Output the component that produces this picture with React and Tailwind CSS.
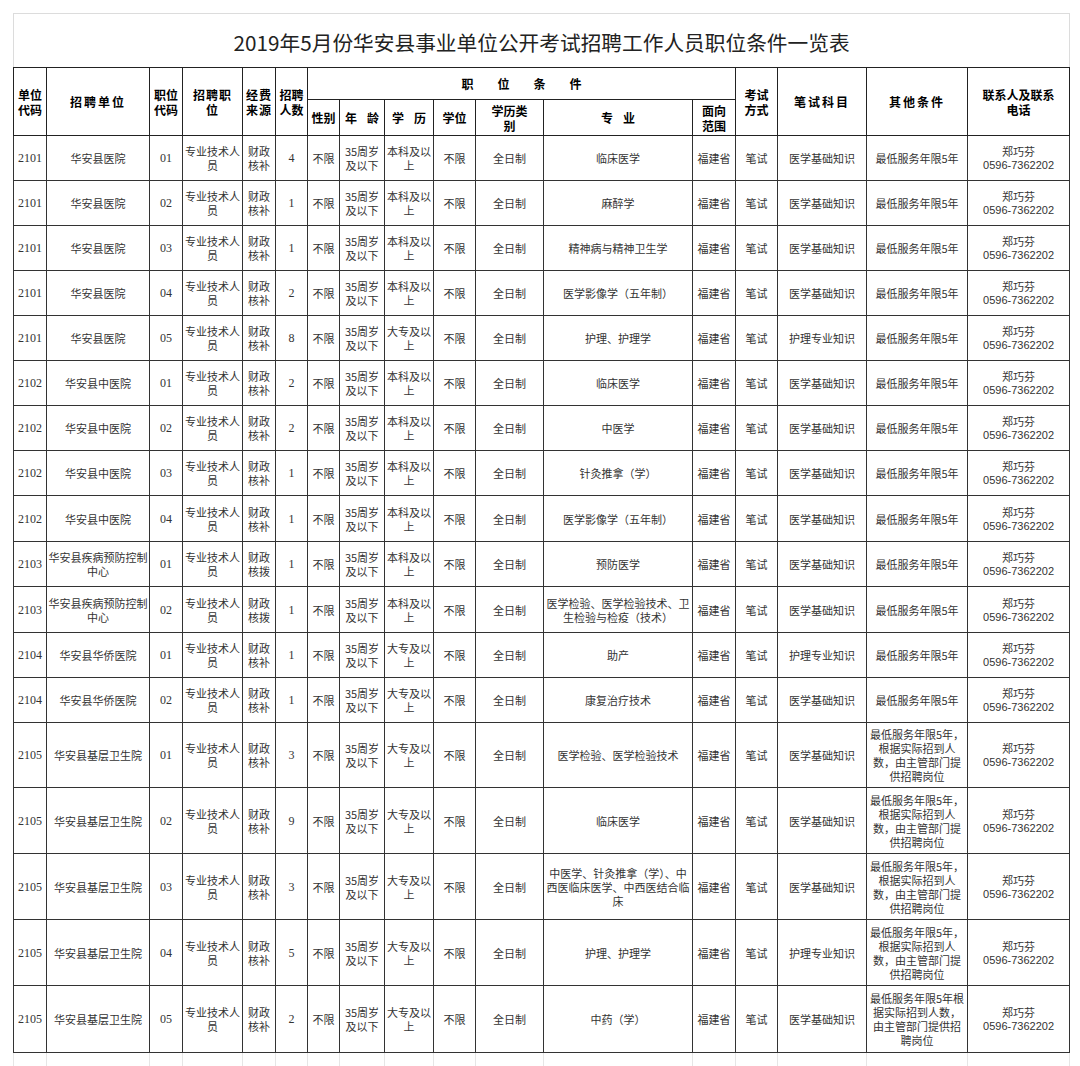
import React from "react";

const widths = [33, 103, 33, 60, 33, 32, 32, 45, 49, 42, 68, 149, 43, 42, 89, 101, 102];

const OTHER4 = ["最低服务年限5年，", "根据实际招到人", "数，由主管部门提", "供招聘岗位"];

const rows = [
  ["2101", "华安县医院", "01", "4", "本科及以", "财政", "核补", ["临床医学"], "医学基础知识", null, 45],
  ["2101", "华安县医院", "02", "1", "本科及以", "财政", "核补", ["麻醉学"], "医学基础知识", null, 45],
  ["2101", "华安县医院", "03", "1", "本科及以", "财政", "核补", ["精神病与精神卫生学"], "医学基础知识", null, 45],
  ["2101", "华安县医院", "04", "2", "本科及以", "财政", "核补", ["医学影像学（五年制）"], "医学基础知识", null, 45],
  ["2101", "华安县医院", "05", "8", "大专及以", "财政", "核补", ["护理、护理学"], "护理专业知识", null, 45],
  ["2102", "华安县中医院", "01", "2", "本科及以", "财政", "核补", ["临床医学"], "医学基础知识", null, 45],
  ["2102", "华安县中医院", "02", "2", "本科及以", "财政", "核补", ["中医学"], "医学基础知识", null, 45],
  ["2102", "华安县中医院", "03", "1", "本科及以", "财政", "核补", ["针灸推拿（学）"], "医学基础知识", null, 45],
  ["2102", "华安县中医院", "04", "1", "本科及以", "财政", "核补", ["医学影像学（五年制）"], "医学基础知识", null, 46],
  ["2103", ["华安县疾病预防控制", "中心"], "01", "1", "本科及以", "财政", "核拨", ["预防医学"], "医学基础知识", null, 45],
  ["2103", ["华安县疾病预防控制", "中心"], "02", "1", "本科及以", "财政", "核拨", ["医学检验、医学检验技术、卫", "生检验与检疫（技术）"], "医学基础知识", null, 46],
  ["2104", "华安县华侨医院", "01", "1", "大专及以", "财政", "核补", ["助产"], "护理专业知识", null, 45],
  ["2104", "华安县华侨医院", "02", "1", "大专及以", "财政", "核补", ["康复治疗技术"], "医学基础知识", null, 45],
  ["2105", "华安县基层卫生院", "01", "3", "大专及以", "财政", "核补", ["医学检验、医学检验技术"], "医学基础知识", OTHER4, 65],
  ["2105", "华安县基层卫生院", "02", "9", "大专及以", "财政", "核补", ["临床医学"], "医学基础知识", OTHER4, 66],
  ["2105", "华安县基层卫生院", "03", "3", "大专及以", "财政", "核补", ["中医学、针灸推拿（学）、中", "西医临床医学、中西医结合临", "床"], "医学基础知识", OTHER4, 66],
  ["2105", "华安县基层卫生院", "04", "5", "大专及以", "财政", "核补", ["护理、护理学"], "护理专业知识", OTHER4, 66],
  ["2105", "华安县基层卫生院", "05", "2", "大专及以", "财政", "核补", ["中药（学）"], "医学基础知识", ["最低服务年限5年根", "据实际招到人数，", "由主管部门提供招", "聘岗位"], 67],
];

function Lines({ items }) {
  return items.map((t, i) => (
    <div key={i} className="whitespace-nowrap">
      {t}
    </div>
  ));
}

const th = "border border-[#222] p-0 text-center align-middle font-bold text-[12px] leading-[15px] text-black";
const td = "border border-[#333] p-0 text-center align-middle text-[11px] leading-[14px] text-[#333]";
const num = "font-['Liberation_Serif',serif] text-[12px]";

export default function App() {
  return (
    <div className="min-h-[1066px] bg-white pl-[13px] pt-[13px] font-['Noto_Sans_CJK_SC',sans-serif]">
      <table className="table-fixed border-collapse w-[1056px]">
        <colgroup>
          {widths.map((w, i) => (
            <col key={i} style={{ width: w }} />
          ))}
        </colgroup>
        <thead>
          <tr className="h-[54px]">
            <td
              colSpan={17}
              className="border-t border-x border-t-[#dcdcdc] border-x-[#dcdcdc] border-b border-b-[#222] text-center align-middle text-[20.7px] text-[#222] pt-[4px]"
            >
              2019年5月份华安县事业单位公开考试招聘工作人员职位条件一览表
            </td>
          </tr>
          <tr className="h-[32px]">
            <th rowSpan={2} className={th}>单位<br />代码</th>
            <th rowSpan={2} className={`${th} tracking-[2px]`}>招聘单位</th>
            <th rowSpan={2} className={th}>职位<br />代码</th>
            <th rowSpan={2} className={`${th} tracking-[1px]`}>招聘职<br />位</th>
            <th rowSpan={2} className={`${th} tracking-[1px]`}>经费<br />来源</th>
            <th rowSpan={2} className={th}>招聘<br />人数</th>
            <th colSpan={7} className={th}>
              <div className="flex justify-center gap-[24px]">
                <span>职</span>
                <span>位</span>
                <span>条</span>
                <span>件</span>
              </div>
            </th>
            <th rowSpan={2} className={th}>考试<br />方式</th>
            <th rowSpan={2} className={`${th} tracking-[2px]`}>笔试科目</th>
            <th rowSpan={2} className={`${th} tracking-[2px]`}>其他条件</th>
            <th rowSpan={2} className={`${th} text-[11.5px]`}>联系人及联系<br />电话</th>
          </tr>
          <tr className="h-[36px]">
            <th className={th}>性别</th>
            <th className={th}>
              <div className="flex justify-center gap-[10px]"><span>年</span><span>龄</span></div>
            </th>
            <th className={th}>
              <div className="flex justify-center gap-[10px]"><span>学</span><span>历</span></div>
            </th>
            <th className={th}>学位</th>
            <th className={th}>学历类<br />别</th>
            <th className={th}>
              <div className="flex justify-center gap-[10px]"><span>专</span><span>业</span></div>
            </th>
            <th className={th}>面向<br />范围</th>
          </tr>
        </thead>
        <tbody>
          {rows.map((r, i) => {
            const [code, unit, pos, count, edu, f1, f2, major, subject, other, h] = r;
            return (
              <tr key={i} style={{ height: h }}>
                <td className={`${td} ${num}`}>{code}</td>
                <td className={td}>
                  {Array.isArray(unit) ? <Lines items={unit} /> : unit}
                </td>
                <td className={`${td} ${num}`}>{pos}</td>
                <td className={td}>
                  <Lines items={["专业技术人", "员"]} />
                </td>
                <td className={td}>
                  <Lines items={[f1, f2]} />
                </td>
                <td className={`${td} ${num}`}>{count}</td>
                <td className={td}>不限</td>
                <td className={td}>
                  <Lines items={["35周岁", "及以下"]} />
                </td>
                <td className={td}>
                  <Lines items={[edu, "上"]} />
                </td>
                <td className={td}>不限</td>
                <td className={td}>全日制</td>
                <td className={td}>
                  <Lines items={major} />
                </td>
                <td className={td}>福建省</td>
                <td className={td}>笔试</td>
                <td className={td}>{subject}</td>
                <td className={td}>
                  {other ? <Lines items={other} /> : "最低服务年限5年"}
                </td>
                <td className={td}>
                  <div>郑巧芬</div>
                  <div className="font-['Liberation_Sans',sans-serif]">0596-7362202</div>
                </td>
              </tr>
            );
          })}
          <tr className="h-[14px]">
            {widths.map((w, i) => (
              <td key={i} className="border-x border-x-[#e6e6e6] p-0" />
            ))}
          </tr>
        </tbody>
      </table>
    </div>
  );
}
